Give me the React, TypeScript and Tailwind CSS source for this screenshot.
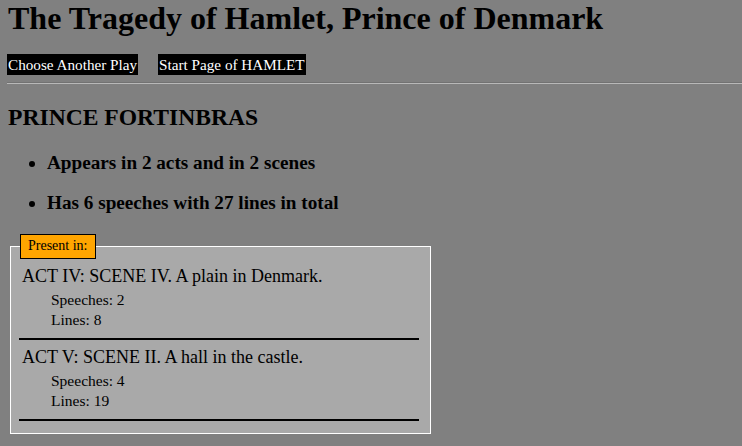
import React from "react";

const scenes = [
  { title: "ACT IV: SCENE IV. A plain in Denmark.", speeches: 2, lines: 8 },
  { title: "ACT V: SCENE II. A hall in the castle.", speeches: 4, lines: 19 },
];

export default function App() {
  return (
    <div className="min-h-screen bg-[#808080] px-2 text-black [font-family:'Liberation_Serif','Times_New_Roman',serif]">
      <h1 className="text-[32px] font-bold leading-[37px]">The Tragedy of Hamlet, Prince of Denmark</h1>
      <div className="mt-[17px] -ml-[1px] flex gap-[20px] text-[15.2px]">
        <span className="block h-[21px] bg-black px-[1px] leading-[21px] text-white">Choose Another Play</span>
        <span className="block h-[21px] bg-black px-[1px] leading-[21px] text-white">Start Page of HAMLET</span>
      </div>
      <div className="mt-[7px] -ml-[1px] -mr-2 h-[2px] border-t border-t-[#727272] border-b border-b-[#b8b8b8]" />
      <h2 className="mt-[19px] text-[23.6px] font-bold leading-[28px]">PRINCE FORTINBRAS</h2>
      <ul className="mt-[21px] list-disc pl-[39px]">
        <li className="text-[19.2px] font-bold leading-[22px]">Appears in 2 acts and in 2 scenes</li>
        <li className="mt-[18px] text-[19.2px] font-bold leading-[22px]">Has 6 speeches with 27 lines in total</li>
      </ul>
      <fieldset className="mx-[2px] mt-[20px] w-[421px] border border-white bg-[#a9a9a9] pb-[12px] pl-[8px] pt-[6px]">
        <legend className="ml-[1px] border border-black bg-[#ffa500] px-[7px] pb-[3px] pt-[1px] text-[14px] leading-[19px]">
          Present in:
        </legend>
        {scenes.map((s, i) => (
          <div key={i} className={i > 0 ? "mt-[6px]" : ""}>
            <div className="pl-[3px] text-[18px] leading-[22px]">{s.title}</div>
            <div className="mt-[3px] pl-[32px] text-[15.5px] leading-[20px]">
              <div>Speeches: {s.speeches}</div>
              <div>Lines: {s.lines}</div>
            </div>
            <div className="mt-[8px] h-[2px] w-[400px] bg-black" />
          </div>
        ))}
      </fieldset>
    </div>
  );
}
